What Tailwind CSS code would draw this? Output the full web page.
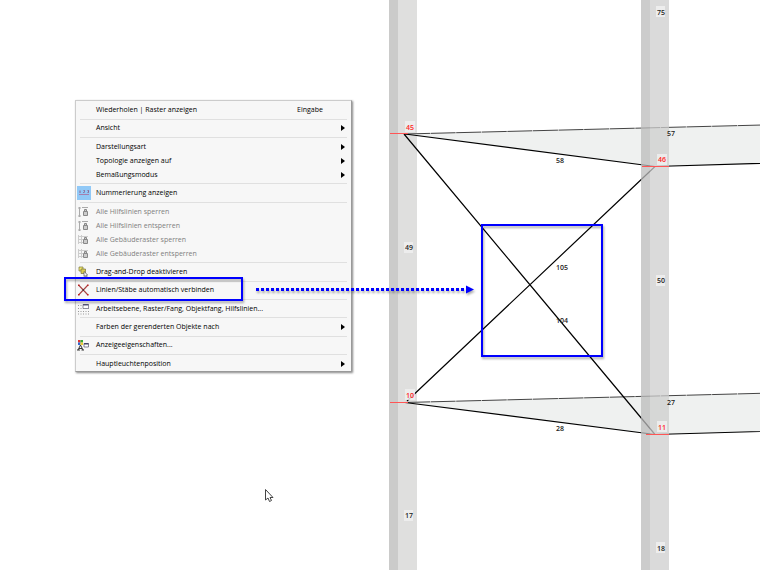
<!DOCTYPE html>
<html lang="de">
<head>
<meta charset="utf-8">
<meta name="viewport" content="width=device-width, initial-scale=1">
<title>Kontextmenü</title>
<script src="https://cdn.jsdelivr.net/npm/@tailwindcss/browser@4"></script>
</head>
<body class="relative min-h-screen overflow-hidden bg-white font-['Open_Sans','Noto_Sans',sans-serif]">

<!-- Model view -->
<svg class="absolute inset-0 size-full" role="img" aria-label="Modellansicht">
  <!-- left column -->
  <rect x="389" width="9" height="100%" fill="#cbcbca"/>
  <rect x="398" width="19" height="100%" fill="#dfdfde"/>
  <!-- beams -->
  <g fill="#eff1f0">
    <path d="M405 134 1160 115V151.500L655 166.500Z"/>
    <path d="M405 402.500 1160 383V420L655 434.500Z"/>
  </g>
  <g fill="none" stroke="#444" stroke-width="1">
    <path d="M405 134 1160 115" stroke-dasharray="25 .6"/>
    <path d="M405 402.500 1160 383" stroke-dasharray="25 .6"/>
  </g>
  <g fill="none" stroke="#000" stroke-width="1.200">
    <path d="M405 134 655 166.500 1160 151.500"/>
    <path d="M405 402.500 655 434.500 1160 420"/>
    <path d="M404 134 655 434.500M655 166.500 407 401"/>
  </g>
  <!-- right column, translucent -->
  <rect x="641" width="9" height="100%" fill="#bbb" fill-opacity=".75"/>
  <rect x="650" width="19" height="100%" fill="#cececd" fill-opacity=".75"/>
  <g stroke="#f55" stroke-width="1">
    <path d="M390 133.500H408M390 402.500H408M642 166.500H669M646 434.500H669"/>
  </g>
  <g fill="#f0f0f0" fill-opacity=".85">
    <rect x="656" y="6" width="9" height="11"/>
    <rect x="404" y="242" width="9" height="11"/>
    <rect x="656" y="275" width="9" height="11"/>
    <rect x="404" y="510" width="9" height="11"/>
    <rect x="656" y="542" width="9" height="11"/>
    <rect x="405" y="121" width="10" height="11"/>
    <rect x="657" y="154" width="10" height="11"/>
    <rect x="405" y="389" width="10" height="11"/>
    <rect x="657" y="421" width="10" height="11"/>
  </g>
  <g class="text-[7px] font-semibold" text-anchor="middle" fill="#222">
    <text x="661" y="15">75</text>
    <text x="409" y="250">49</text>
    <text x="661" y="283">50</text>
    <text x="409" y="518">17</text>
    <text x="661" y="551">18</text>
    <text x="560" y="163">58</text>
    <text x="560" y="431">28</text>
    <text x="671" y="136">57</text>
    <text x="671" y="405">27</text>
    <text x="562" y="270">105</text>
    <text x="562" y="323">104</text>
  </g>
  <g class="text-[7px] font-semibold" text-anchor="middle" fill="#f22">
    <text x="410" y="130">45</text>
    <text x="662" y="162">46</text>
    <text x="410" y="398">10</text>
    <text x="662" y="430">11</text>
  </g>
</svg>

<!-- Context menu -->
<ul role="menu" class="absolute left-[75px] top-[100px] flex min-h-[272px] w-[277px] flex-col justify-between border border-[#ccc] border-r-[#999] border-b-[#999] bg-[#f7f7f7] pt-0.5 text-[7px] font-medium leading-[14px] text-black shadow-[1px_1px_2px_#888] [&_button]:flex [&_button]:w-full [&_button]:items-center [&_button]:pr-1.5 [&_button]:text-left [&_hr]:mr-1 [&_hr]:ml-1 [&_hr]:border-[#e0e0e0] [&_i]:flex [&_i]:h-[14px] [&_i]:w-5 [&_i]:shrink-0 [&_i]:items-center [&_i]:pl-px [&_span]:grow [&_b]:font-medium">
  <li><button role="menuitem"><i></i><span>Wiederholen | Raster anzeigen</span><b class="w-12 text-left">Eingabe</b></button></li>
  <li role="separator"><hr></li>
  <li><button role="menuitem"><i></i><span>Ansicht</span><svg class="h-1.5 w-1" viewBox="0 0 4 6"><path d="M0 0 4 3 0 6Z"/></svg></button></li>
  <li role="separator"><hr></li>
  <li>
    <button role="menuitem"><i></i><span>Darstellungsart</span><svg class="h-1.5 w-1" viewBox="0 0 4 6"><path d="M0 0 4 3 0 6Z"/></svg></button>
    <button role="menuitem"><i></i><span>Topologie anzeigen auf</span><svg class="h-1.5 w-1" viewBox="0 0 4 6"><path d="M0 0 4 3 0 6Z"/></svg></button>
    <button role="menuitem"><i></i><span>Bemaßungsmodus</span><svg class="h-1.5 w-1" viewBox="0 0 4 6"><path d="M0 0 4 3 0 6Z"/></svg></button>
  </li>
  <li role="separator"><hr></li>
  <li><button role="menuitemcheckbox" aria-checked="true"><i><svg class="h-[14px] w-[14px]" viewBox="0 0 14 14"><path fill="#91c9f7" d="M0 0h14v14H0z"/><path d="M2 8.500h10" stroke="#a57fae" stroke-width="1"/><path d="M3 4.500v2.500M6.500 4.500h1v1l-1 1h1M10.500 4.500h1v2h-1" fill="none" stroke="#8a4c78" stroke-width=".8"/></svg></i><span>Nummerierung anzeigen</span></button></li>
  <li role="separator"><hr></li>
  <li class="text-[#808080]">
    <button role="menuitem" disabled><i><svg class="size-3" viewBox="0 0 12 12" fill="none" stroke="#aaa"><path d="M2.500 1v10M1 2h3M1 10h3M5 1.500h6"/><path fill="#ccc" stroke="#888" d="M6.500 5.500h4v4h-4zM7.500 5V3.500h2V5"/></svg></i><span>Alle Hilfslinien sperren</span></button>
    <button role="menuitem" disabled><i><svg class="size-3" viewBox="0 0 12 12" fill="none" stroke="#aaa"><path d="M2.500 1v10M1 2h3M1 10h3M5 1.500h6"/><path fill="#ccc" stroke="#888" d="M6.500 5.500h4v4h-4zM7.500 5V3.500h2V5"/></svg></i><span>Alle Hilfslinien entsperren</span></button>
    <button role="menuitem" disabled><i><svg class="size-3" viewBox="0 0 12 12" fill="none" stroke="#aaa"><path stroke="#ccc" d="M1.500 1v9M4.500 1v9M1 2.500h10M1 5.500h5M1 8.500h5"/><path fill="#ccc" stroke="#888" d="M6.500 5.500h4v4h-4zM7.500 5V3.500h2V5"/></svg></i><span>Alle Gebäuderaster sperren</span></button>
    <button role="menuitem" disabled><i><svg class="size-3" viewBox="0 0 12 12" fill="none" stroke="#aaa"><path stroke="#ccc" d="M1.500 1v9M4.500 1v9M1 2.500h10M1 5.500h5M1 8.500h5"/><path fill="#ccc" stroke="#888" d="M6.500 5.500h4v4h-4zM7.500 5V3.500h2V5"/></svg></i><span>Alle Gebäuderaster entsperren</span></button>
  </li>
  <li role="separator"><hr></li>
  <li><button role="menuitem"><i><svg class="size-3" viewBox="0 0 12 12"><path fill="#f3e96b" stroke="#777240" stroke-width=".7" d="M2 1h4v4H2z"/><path fill="#d9cb4e" stroke="#777240" stroke-width=".7" d="M4 3h4.500v4.500H4z"/><path fill="#fff" stroke="#555" stroke-width=".7" d="M7 5.500v5l1.200-1 1 2 .9-.5-1-1.800 1.600-.2Z"/></svg></i><span>Drag-and-Drop deaktivieren</span></button></li>
  <li role="separator"><hr></li>
  <li><button role="menuitem"><i><svg class="size-3" viewBox="0 0 12 12"><path d="M2 1.500 10.500 10.500M10.500 1.500 2 10.500" stroke="#a44" stroke-width="1.100"/><path fill="#b22" d="M1 .5h1.600v1.600H1zM10 .5h1.600v1.600h-1.600zM1 10h1.600v1.600H1zM10 10h1.600v1.600h-1.600z"/><path fill="#333" d="M5.500 5.200h1.500v1.500H5.500z"/></svg></i><span>Linien/Stäbe automatisch verbinden</span></button></li>
  <li role="separator"><hr></li>
  <li><button role="menuitem"><i><svg class="size-3" viewBox="0 0 12 12"><path d="M1 2.500h5M1 5.500h11M1 8.500h11M1 11h11" stroke="#999" stroke-width="1" stroke-dasharray="1 1.500"/><path fill="#fff" stroke="#778" stroke-width=".8" d="M6 1.500h5.500v4H6z"/><path fill="#557" d="M6 1h5.500v1.500H6z"/></svg></i><span>Arbeitsebene, Raster/Fang, Objektfang, Hilfslinien...</span></button></li>
  <li role="separator"><hr></li>
  <li><button role="menuitem"><i></i><span>Farben der gerenderten Objekte nach</span><svg class="h-1.5 w-1" viewBox="0 0 4 6"><path d="M0 0 4 3 0 6Z"/></svg></button></li>
  <li role="separator"><hr></li>
  <li><button role="menuitem"><i><svg class="size-3" viewBox="0 0 12 12"><path fill="#d33" d="M1 1h2.500v2.500H1z"/><path fill="#3a3" d="M3.500 1H6v2.500H3.500z"/><path fill="#36c" d="M1 3.500h2.500V6H1z"/><path fill="#ec3" d="M3.500 3.500H6V6H3.500z"/><path fill="none" stroke="#222" stroke-width=".9" d="M1 11 3.500 6 6 11M2 9.500h3M0 11h3M4.500 11H7"/><path fill="#fff" stroke="#667" stroke-width=".8" d="M7 4.500h4.500v3.500H7z"/><path fill="#446" d="M7 4h4.500v1.500H7z"/></svg></i><span>Anzeigeeigenschaften...</span></button></li>
  <li role="separator"><hr></li>
  <li><button role="menuitem"><i></i><span>Hauptleuchtenposition</span><svg class="h-1.5 w-1" viewBox="0 0 4 6"><path d="M0 0 4 3 0 6Z"/></svg></button></li>
</ul>

<!-- Callout marks and pointer -->
<svg class="pointer-events-none absolute inset-0 size-full" aria-hidden="true">
  <g class="drop-shadow-[1px_2px_1px_#0005]" fill="none" stroke="#00f" stroke-width="2">
    <rect x="65" y="278" width="177" height="22"/>
    <rect x="482" y="225" width="120" height="131"/>
    <path d="M256 289.500H466" stroke-width="3" stroke-dasharray="3 2"/>
    <path d="M466 285.500 474 289.500 466 293.500Z" fill="#00f" stroke="none"/>
  </g>
  <path d="M265.500 489.500V500L268 498 269.500 501.500 271.500 500.500 270 497.500H273Z" fill="#fff" stroke="#444" stroke-width="1"/>
</svg>
</body>
</html>
